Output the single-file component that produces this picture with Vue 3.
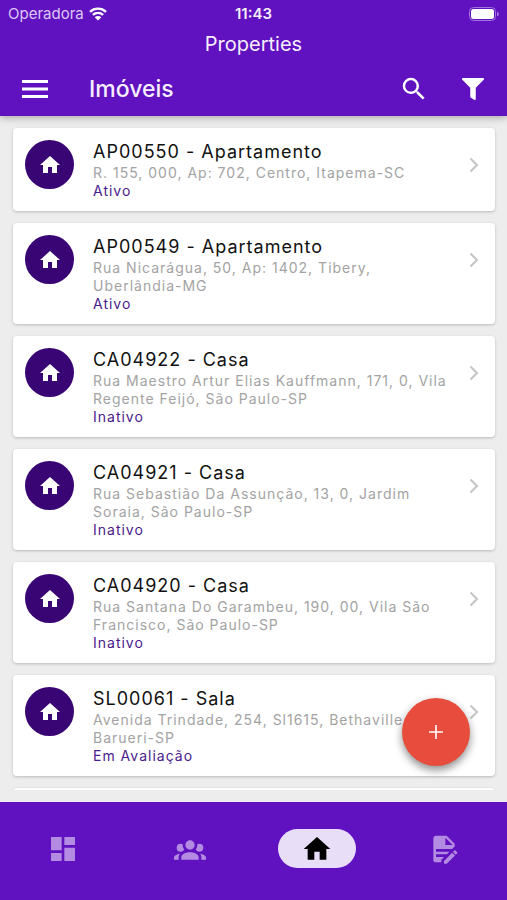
<script setup>
import { ref } from 'vue'

const icons = {
  home: 'M10,20V14H14V20H19V12H22L12,3L2,12H5V20H10Z',
  dashboard: 'M13,3V9H21V3M13,21H21V11H13M3,21H11V15H3M3,13H11V3H3V13Z',
  group: 'M12,5.5A3.5,3.5 0 0,1 15.5,9A3.5,3.5 0 0,1 12,12.5A3.5,3.5 0 0,1 8.5,9A3.5,3.5 0 0,1 12,5.5M5,8C5.56,8 6.08,8.15 6.53,8.42C6.38,9.85 6.8,11.27 7.66,12.38C7.16,13.34 6.16,14 5,14A3,3 0 0,1 2,11A3,3 0 0,1 5,8M19,8A3,3 0 0,1 22,11A3,3 0 0,1 19,14C17.84,14 16.84,13.34 16.34,12.38C17.2,11.27 17.62,9.85 17.47,8.42C17.92,8.15 18.44,8 19,8M5.5,18.25C5.5,16.18 8.41,14.5 12,14.5C15.59,14.5 18.5,16.18 18.5,18.25V20H5.5V18.25M0,20V18.5C0,17.11 1.89,15.94 4.45,15.6C3.86,16.28 3.5,17.22 3.5,18.25V20H0M24,20H20.5V18.25C20.5,17.22 20.14,16.28 19.55,15.6C22.11,15.94 24,17.11 24,18.5V20Z',
  document: 'M6,2C4.89,2 4,2.89 4,4V20A2,2 0 0,0 6,22H10V20.09L12.09,18H6V16H14.09L16.09,14H6V12H18.09L20,10.09V8L14,2H6M13,3.5L18.5,9H13V3.5M20.15,13C20,13 19.86,13.05 19.75,13.16L18.73,14.18L20.82,16.26L21.84,15.25C22.05,15.03 22.05,14.67 21.84,14.46L20.54,13.16C20.43,13.05 20.29,13 20.15,13M18.14,14.77L12,20.92V23H14.08L20.23,16.85L18.14,14.77Z',
}

const properties = [
  { title: 'AP00550 - Apartamento', address: 'R. 155, 000, Ap: 702, Centro, Itapema-SC', status: 'Ativo' },
  { title: 'AP00549 - Apartamento', address: 'Rua Nicarágua, 50, Ap: 1402, Tibery, Uberlândia-MG', status: 'Ativo' },
  { title: 'CA04922 - Casa', address: 'Rua Maestro Artur Elias Kauffmann, 171, 0, Vila Regente Feijó, São Paulo-SP', status: 'Inativo' },
  { title: 'CA04921 - Casa', address: 'Rua Sebastião Da Assunção, 13, 0, Jardim Soraia, São Paulo-SP', status: 'Inativo' },
  { title: 'CA04920 - Casa', address: 'Rua Santana Do Garambeu, 190, 00, Vila São Francisco, São Paulo-SP', status: 'Inativo' },
  { title: 'SL00061 - Sala', address: 'Avenida Trindade, 254, Sl1615, Bethaville, Barueri-SP', status: 'Em Avaliação' },
]

const tabs = [
  { id: 'dashboard', label: 'Dashboard' },
  { id: 'group', label: 'Clientes' },
  { id: 'home', label: 'Imóveis' },
  { id: 'document', label: 'Contratos' },
]
const active = ref('home')
</script>

<template>
  <div class="app">
    <header class="header">
      <div class="statusbar">
        <div class="carrier">
          <span>Operadora</span>
          <svg class="wifi" viewBox="0 0 18 14" aria-hidden="true">
            <path d="M1 4.8C5.5 .6 12.500 .6 17 4.800M3.900 7.900C6.800 5.200 11.200 5.200 14.100 7.900" />
            <path class="solid" d="M9 13.600L5.700 10.300C7.600 8.600 10.400 8.600 12.300 10.300Z" />
          </svg>
        </div>
        <span class="time">11:43</span>
        <svg class="battery" viewBox="0 0 30 14" aria-hidden="true">
          <rect class="case" x=".5" y=".5" width="26" height="13" rx="4" />
          <rect x="2" y="2" width="23" height="10" rx="2.500" />
          <path class="tip" d="M28 4.500Q30 5.500 30 7T28 9.500Z" />
        </svg>
      </div>
      <div class="screen-name">Properties</div>
      <div class="toolbar">
        <button class="icon-button" type="button" aria-label="Menu">
          <svg class="menu" viewBox="0 0 26 18"><path d="M0 0H26V3H0ZM0 7.500H26V10.500H0ZM0 15H26V18H0Z" /></svg>
        </button>
        <h1>Imóveis</h1>
        <button class="icon-button" type="button" aria-label="Buscar">
          <svg class="search" viewBox="0 0 24 24"><path d="M15.500 14h-.79l-.28-.27A6.471 6.471 0 0 0 16 9.500 6.500 6.500 0 1 0 9.500 16c1.610 0 3.090-.59 4.230-1.570l.27.28v.79l5 4.990L20.490 19l-4.990-5zm-6 0C7.010 14 5 11.990 5 9.500S7.010 5 9.500 5 14 7.010 14 9.500 11.990 14 9.500 14z" /></svg>
        </button>
        <button class="icon-button" type="button" aria-label="Filtrar">
          <svg class="filter" viewBox="0 0 512 512"><path d="M488 0H24C2.700 0-8 25.900 7 41l185 185V432c0 7.800 3.800 15.200 10.200 19.700l80 56C298 518.700 320 507.500 320 488V226L505 41C520 25.900 509.300 0 488 0z" /></svg>
        </button>
      </div>
    </header>

    <main class="content">
      <ul class="list">
        <li v-for="item in properties" :key="item.title">
          <a class="card" href="#">
            <span class="avatar"><svg viewBox="0 0 24 24"><path :d="icons.home" /></svg></span>
            <span class="info">
              <span class="title">{{ item.title }}</span>
              <span class="address">{{ item.address }}</span>
              <span class="status">{{ item.status }}</span>
            </span>
            <svg class="chevron" viewBox="0 0 10 16"><path d="M1.500 1.500L8 8L1.500 14.500" /></svg>
          </a>
        </li>
        <li class="card next"></li>
      </ul>
      <button class="fab" type="button" aria-label="Adicionar">
        <svg viewBox="0 0 14 14"><path d="M7 0V14M0 7H14" /></svg>
      </button>
    </main>

    <nav class="tabs">
      <button
        v-for="tab in tabs"
        :key="tab.id"
        type="button"
        class="tab"
        :class="{ active: active === tab.id }"
        :aria-label="tab.label"
        @click="active = tab.id"
      >
        <span class="pill"><svg viewBox="0 0 24 24"><path :d="icons[tab.id]" /></svg></span>
      </button>
    </nav>
  </div>
</template>

<style>
body {
  background: #ededed;
}
</style>

<style scoped>
.app {
  display: flex;
  flex-direction: column;
  height: 100vh;
  background: #ededed;
  font-family: Inter, "Liberation Sans", sans-serif;
}

button {
  border: 0;
  padding: 0;
  background: none;
  font: inherit;
  cursor: pointer;
}

svg {
  display: block;
  fill: currentColor;
}

.header {
  position: relative;
  z-index: 1;
  flex: none;
  background: #6011c0;
  color: #f6eefd;
  box-shadow: 0 1px 8px rgba(0, 0, 0, 0.35);
}

.statusbar {
  display: grid;
  grid-template-columns: 1fr auto 1fr;
  align-items: center;
  height: 27px;
  padding: 0 8px;
}

.carrier {
  display: flex;
  align-items: center;
  gap: 5px;
  font-size: 15px;
  color: #dcc8f4;
}

.wifi {
  width: 18px;
  height: 14px;
  color: #fff;
  fill: none;
  stroke: currentColor;
  stroke-width: 2.4;
}

.wifi .solid {
  fill: currentColor;
  stroke: none;
}

.time {
  font-size: 15px;
  font-weight: 600;
}

.battery {
  justify-self: end;
  width: 30px;
  height: 14px;
  color: #fff;
}

.battery .case {
  fill: none;
  stroke: #a274dc;
}

.battery .tip {
  fill: #a274dc;
}

.screen-name {
  height: 34px;
  line-height: 34px;
  text-align: center;
  font-size: 20px;
}

.toolbar {
  display: flex;
  align-items: center;
  height: 55px;
  padding: 0 5px;
}

.icon-button {
  display: grid;
  place-items: center;
  width: 59px;
  height: 48px;
  color: #fff;
}

.menu {
  width: 26px;
  height: 18px;
}

.search {
  width: 30px;
  height: 30px;
}

.filter {
  width: 22px;
  height: 22px;
}

h1 {
  flex: 1;
  margin: 0 0 0 25px;
  font-size: 23px;
  font-weight: 500;
}

.content {
  position: relative;
  flex: 1;
  min-height: 0;
  padding-bottom: 12px;
  display: flex;
}

.list {
  flex: 1;
  display: flex;
  flex-direction: column;
  gap: 12px;
  margin: 0;
  padding: 12px 12px 0 13px;
  list-style: none;
  overflow-y: auto;
  scrollbar-width: none;
}

.card {
  display: flex;
  align-items: flex-start;
  padding: 12px;
  border-radius: 4px;
  background: #fff;
  box-shadow: 0 1px 3px rgba(0, 0, 0, 0.22);
  text-decoration: none;
  letter-spacing: 1px;
}

.avatar {
  display: grid;
  place-items: center;
  flex: none;
  width: 49px;
  height: 49px;
  border-radius: 50%;
  background: #390474;
  color: #fff;
}

.avatar svg {
  width: 24px;
  height: 24px;
}

.info {
  flex: 1;
  display: flex;
  flex-direction: column;
  margin: 0 16px 0 19px;
}

.title {
  font-size: 18px;
  line-height: 24px;
  color: #111;
}

.address {
  font-size: 14px;
  line-height: 18px;
  color: #a3a3a3;
}

.status {
  font-size: 14px;
  line-height: 17px;
  color: #4b1a8c;
}

.chevron {
  flex: none;
  width: 10px;
  height: 16px;
  margin: 17px 4px 0 0;
  fill: none;
  stroke: #c4c4c4;
  stroke-width: 2;
}

.next {
  flex: none;
  height: 77px;
}

.fab {
  position: absolute;
  right: 37px;
  bottom: 36px;
  display: grid;
  place-items: center;
  width: 68px;
  height: 68px;
  border-radius: 50%;
  background: #e74c3c;
  box-shadow: 0 4px 8px rgba(0, 0, 0, 0.45);
}

.fab svg {
  width: 14px;
  height: 14px;
  stroke: #fff;
  stroke-width: 1.6;
}

.tabs {
  flex: none;
  display: grid;
  grid-template-columns: repeat(4, 1fr);
  height: 98px;
  background: #6011c0;
}

.tab {
  display: flex;
  justify-content: center;
  padding-top: 27px;
  color: #b48be2;
}

.pill {
  display: grid;
  place-items: center;
  width: 78px;
  height: 39px;
  border-radius: 20px;
}

.pill svg {
  width: 32px;
  height: 32px;
}

.active {
  color: #000;
}

.active .pill {
  background: #e8def8;
}
</style>
